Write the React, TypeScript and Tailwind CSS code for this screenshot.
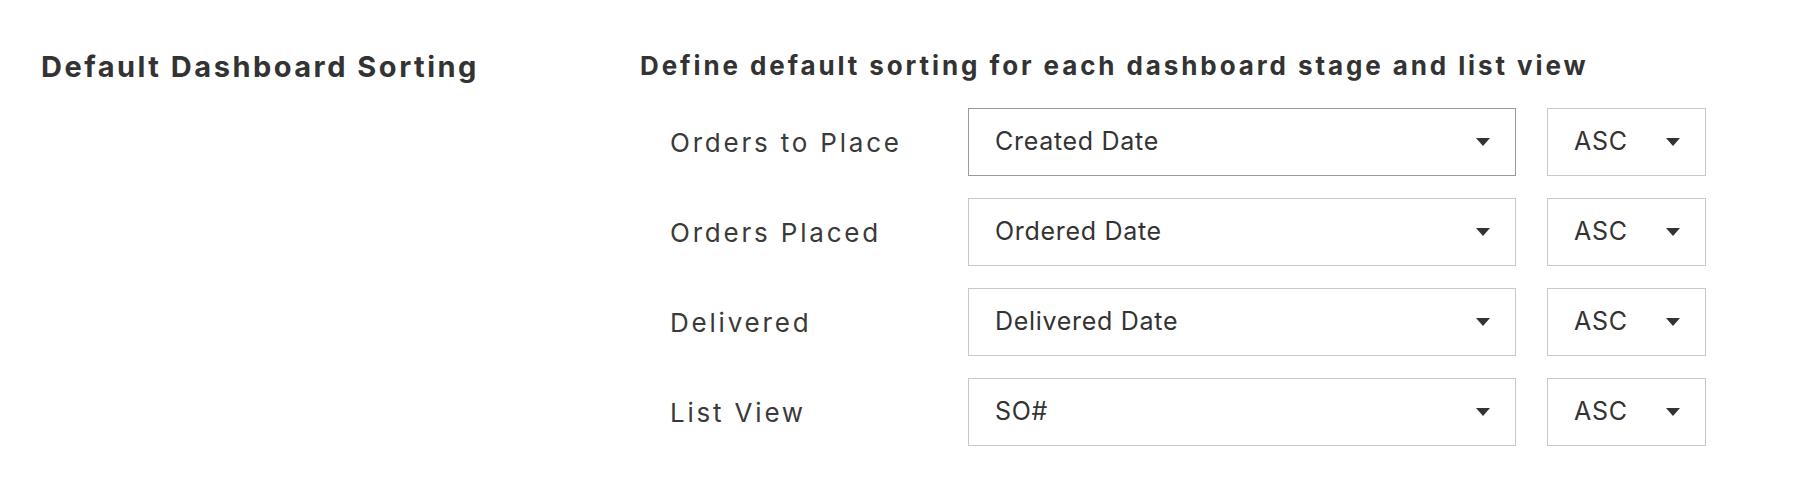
import { useState } from "react";

const ROWS = [
  { label: "Orders to Place", field: "Created Date", dir: "ASC", active: true },
  { label: "Orders Placed", field: "Ordered Date", dir: "ASC" },
  { label: "Delivered", field: "Delivered Date", dir: "ASC" },
  { label: "List View", field: "SO#", dir: "ASC" },
];

function Caret() {
  return (
    <svg width="14" height="8" viewBox="0 0 14 8" className="shrink-0">
      <path d="M0 0h14L7 8z" fill="#333" />
    </svg>
  );
}

function Select({ value, className, active }: { value: string; className: string; active?: boolean }) {
  return (
    <div
      className={`flex h-[68px] items-center justify-between border bg-white pl-[26px] pr-[25px] text-[25px] tracking-[0.7px] text-[#333] ${
        active ? "border-[#9a9a9a]" : "border-[#c8c8c8]"
      } ${className}`}
    >
      <span>{value}</span>
      <Caret />
    </div>
  );
}

export default function App() {
  const [rows] = useState(ROWS);

  return (
    <div className="flex h-[504px] w-[1804px] bg-white pl-[41px] pt-[49px] font-['Inter',sans-serif] text-[#333]">
      <div className="w-[599px] shrink-0">
        <h2 className="text-[29px] font-bold leading-[36px] tracking-[2.5px]">Default Dashboard Sorting</h2>
      </div>
      <div>
        <h3 className="text-[26px] font-bold leading-[34px] tracking-[2.9px]">
          Define default sorting for each dashboard stage and list view
        </h3>
        <div className="mt-[25px] flex flex-col gap-[22px] pl-[30px]">
          {rows.map((r) => (
            <div key={r.label} className="flex items-center">
              <span className="w-[298px] shrink-0 text-[26px] tracking-[2.8px] text-[#3a3a3a]">{r.label}</span>
              <Select value={r.field} active={r.active} className="w-[548px]" />
              <Select value={r.dir} className="ml-[31px] w-[159px]" />
            </div>
          ))}
        </div>
      </div>
    </div>
  );
}
